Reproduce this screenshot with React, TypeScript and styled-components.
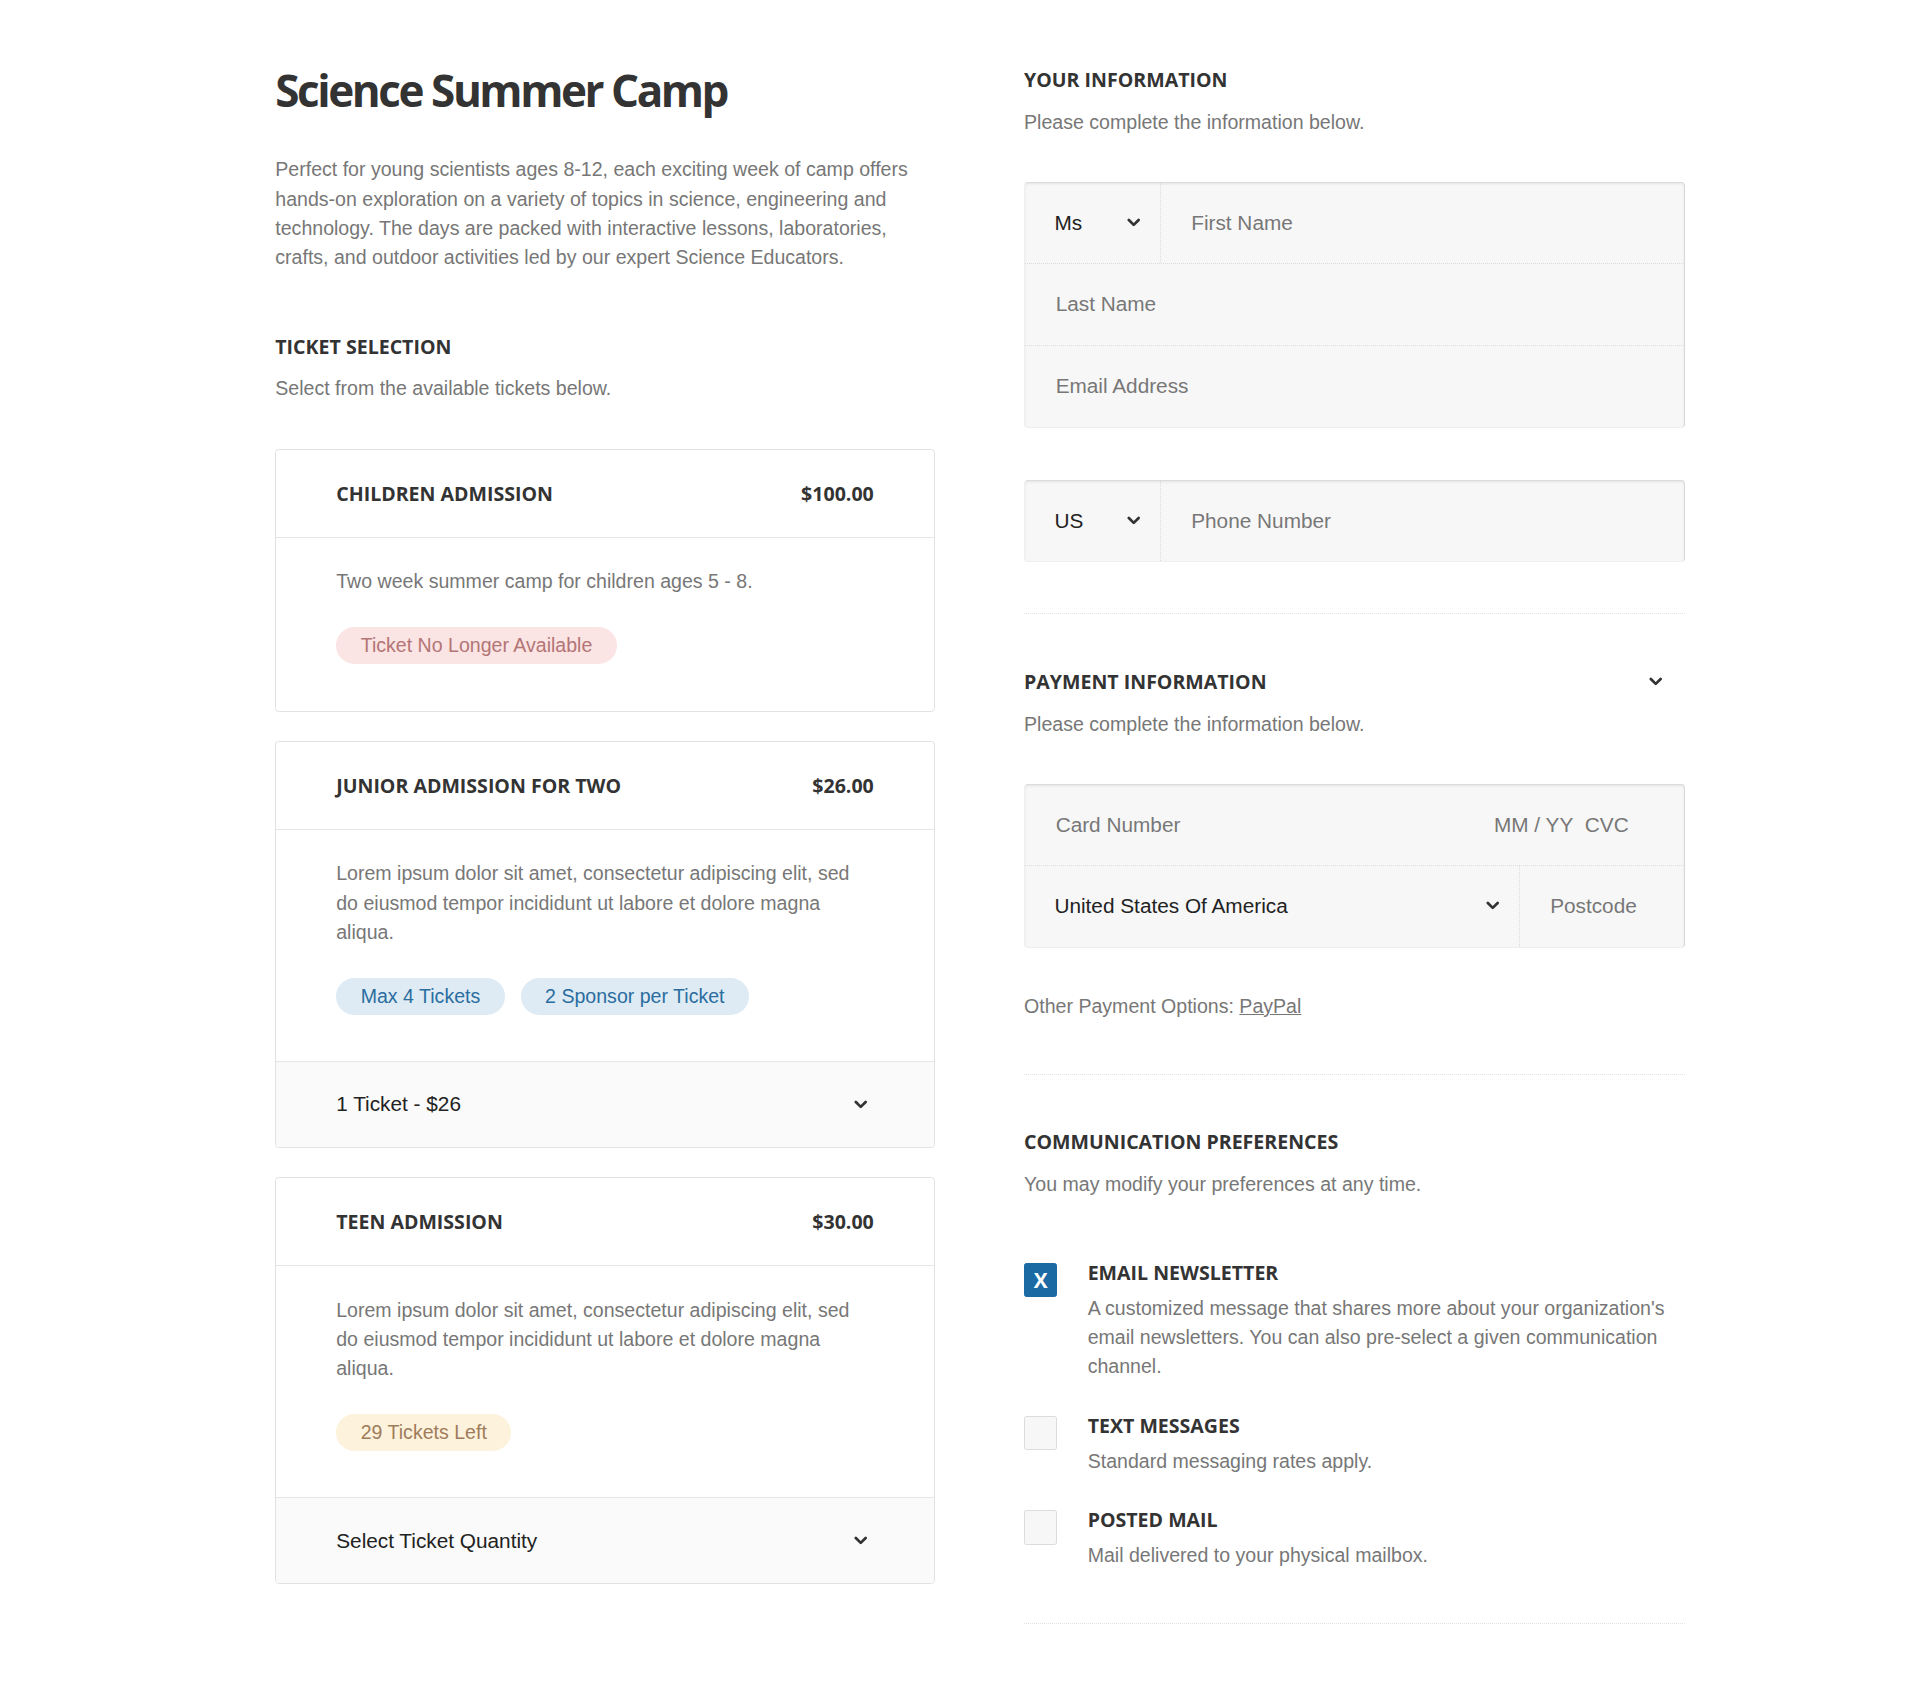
import React from 'react'
import styled, { createGlobalStyle } from 'styled-components'

const headFont = `'Open Sans', 'Noto Sans', sans-serif`
const bodyFont = `'Liberation Sans', Arial, sans-serif`

const GlobalStyle = createGlobalStyle`
	html, body {
		margin: 0;
		padding: 0;
		background: #ffffff;
	}
	* {
		box-sizing: border-box;
	}
`

// the reference is drawn at ~1.22x, so design px are scaled once here
const Page = styled.div`
	zoom: 1.2235;
	width: 1569px;
	min-height: 1382px;
	display: grid;
	grid-template-columns: 539px 540px;
	column-gap: 73px;
	align-items: start;
	padding-left: 225px;
	background: #fff;
`

const Column = styled.div<{ $top: number }>`
	display: flex;
	flex-direction: column;
	padding-top: ${(p) => p.$top}px;
`

const Title = styled.h1`
	margin: 0;
	font-family: ${headFont};
	font-weight: 700;
	font-size: 36px;
	line-height: 44px;
	letter-spacing: -2px;
	color: #333;
`

const Lead = styled.p`
	margin: 31px 0 0;
	font-family: ${bodyFont};
	font-size: 16px;
	line-height: 24px;
	color: #777;
`

const SectionHead = styled.div<{ $mt: number }>`
	display: flex;
	align-items: center;
	justify-content: space-between;
	margin-top: ${(p) => p.$mt}px;
	padding-right: 18px;
`

const SectionTitle = styled.h2`
	margin: 0;
	font-family: ${headFont};
	font-weight: 700;
	font-size: 16px;
	line-height: 24px;
	color: #333;
`

const Subtitle = styled.p`
	margin: 11px 0 0;
	font-family: ${bodyFont};
	font-size: 16px;
	line-height: 24px;
	color: #777;
`

const CardStack = styled.div`
	display: flex;
	flex-direction: column;
	gap: 24px;
	margin-top: 37px;
`

const TicketCard = styled.section`
	border: 1px solid #e2e2e2;
	border-radius: 3px;
	background: #fff;
	overflow: hidden;
`

const CardHeader = styled.header`
	display: flex;
	align-items: center;
	justify-content: space-between;
	height: 72px;
	padding: 0 49px;
	border-bottom: 1px solid #e6e6e6;
	font-family: ${headFont};
	font-weight: 700;
	font-size: 16px;
	color: #333;
`

const CardBody = styled.div`
	padding: 24px 49px 38px;
`

const Description = styled.p`
	margin: 0;
	font-family: ${bodyFont};
	font-size: 16px;
	line-height: 24px;
	color: #777;
`

const BadgeRow = styled.div`
	display: flex;
	gap: 13px;
	margin-top: 25px;
`

const badgeTones = {
	red: { bg: '#fbe4e4', fg: '#b37575' },
	blue: { bg: '#deebf4', fg: '#2b6d9f' },
	yellow: { bg: '#fdf2db', fg: '#a07c5c' },
}

const Badge = styled.span<{ $tone: keyof typeof badgeTones }>`
	display: inline-flex;
	align-items: center;
	height: 30px;
	padding: 0 20px;
	border-radius: 15px;
	font-family: ${bodyFont};
	font-size: 16px;
	color: ${(p) => badgeTones[p.$tone].fg};
	background: ${(p) => badgeTones[p.$tone].bg};
`

const CardFooter = styled.div`
	display: flex;
	align-items: center;
	justify-content: space-between;
	height: 70px;
	padding: 0 54px 0 49px;
	border-top: 1px solid #e6e6e6;
	background: #fafafa;
	font-family: ${bodyFont};
	font-size: 17px;
	color: #222;
`

const FieldGroup = styled.div<{ $mt: number }>`
	margin-top: ${(p) => p.$mt}px;
	border: 1px solid #efefef;
	border-top-color: #dcdcdc;
	border-right-color: #d8d8d8;
	border-radius: 3px;
	background: #f7f7f7;
	box-shadow: inset 0 1px 2px rgba(0, 0, 0, 0.07);
`

const FieldRow = styled.div`
	display: flex;
	height: 65px;
	& + & {
		height: 67px;
		border-top: 1px dotted #dcdcdc;
	}
`

const SelectCell = styled.div<{ $w?: number }>`
	display: flex;
	align-items: center;
	justify-content: space-between;
	${(p) => (p.$w ? `width: ${p.$w}px;` : 'flex: 1;')}
	padding: 0 16px 0 24px;
	font-family: ${bodyFont};
	font-size: 17px;
	color: #222;
`

const InputCell = styled.div<{ $w?: number }>`
	display: flex;
	align-items: center;
	${(p) => (p.$w ? `width: ${p.$w}px;` : 'flex: 1;')}
	padding: 0 45px 0 25px;
	border-left: 1px dotted #dcdcdc;
	font-family: ${bodyFont};
	font-size: 17px;
	color: #777;
	&:first-child {
		border-left: none;
	}
`

const Spacer = styled.span`
	flex: 1;
`

const Divider = styled.hr<{ $mt: number }>`
	width: 100%;
	height: 0;
	margin: ${(p) => p.$mt}px 0 0;
	border: none;
	border-top: 1px dotted #e2e2e2;
`

const OtherOptions = styled.p`
	margin: 36px 0 0;
	font-family: ${bodyFont};
	font-size: 16px;
	line-height: 24px;
	color: #777;
	a {
		color: #777;
		text-decoration: underline;
	}
`

const PrefList = styled.div`
	display: flex;
	flex-direction: column;
	gap: 24px;
	margin-top: 48px;
`

const PrefItem = styled.div`
	display: grid;
	grid-template-columns: 27px 1fr;
	column-gap: 25px;
	align-items: start;
`

const Checkbox = styled.span<{ $checked?: boolean }>`
	display: flex;
	align-items: center;
	justify-content: center;
	width: 27px;
	height: 28px;
	margin-top: 4px;
	border-radius: 2px;
	border: 1px solid ${(p) => (p.$checked ? '#1c6aa3' : '#dcdcdc')};
	background: ${(p) => (p.$checked ? '#1c6aa3' : '#f7f7f7')};
	color: #fff;
	font-family: ${headFont};
	font-weight: 700;
	font-size: 17px;
	line-height: 1;
`

const PrefTitle = styled.h3`
	margin: 0;
	font-family: ${headFont};
	font-weight: 700;
	font-size: 16px;
	line-height: 24px;
	color: #333;
`

const PrefDesc = styled.p`
	margin: 5px 0 0;
	font-family: ${bodyFont};
	font-size: 16px;
	line-height: 24px;
	color: #777;
`

const Chevron = () => (
	<svg width="11" height="8" viewBox="0 0 11 8" aria-hidden="true">
		<path
			d="M1.5 1.6 L5.5 5.6 L9.5 1.6"
			fill="none"
			stroke="#333"
			strokeWidth="2.2"
			strokeLinecap="round"
			strokeLinejoin="round"
		/>
	</svg>
)

const tickets = [
	{
		name: 'Children Admission',
		price: '$100.00',
		text: 'Two week summer camp for children ages 5 - 8.',
		badges: [{ tone: 'red', label: 'Ticket No Longer Available' }],
		select: null,
	},
	{
		name: 'Junior Admission for Two',
		price: '$26.00',
		text: 'Lorem ipsum dolor sit amet, consectetur adipiscing elit, sed do eiusmod tempor incididunt ut labore et dolore magna aliqua.',
		badges: [
			{ tone: 'blue', label: 'Max 4 Tickets' },
			{ tone: 'blue', label: '2 Sponsor per Ticket' },
		],
		select: '1 Ticket - $26',
	},
	{
		name: 'Teen Admission',
		price: '$30.00',
		text: 'Lorem ipsum dolor sit amet, consectetur adipiscing elit, sed do eiusmod tempor incididunt ut labore et dolore magna aliqua.',
		badges: [{ tone: 'yellow', label: '29 Tickets Left' }],
		select: 'Select Ticket Quantity',
	},
] as const

const prefs = [
	{
		title: 'Email Newsletter',
		text: "A customized message that shares more about your organization's email newsletters. You can also pre-select a given communication channel.",
		checked: true,
	},
	{
		title: 'Text Messages',
		text: 'Standard messaging rates apply.',
		checked: false,
	},
	{
		title: 'Posted Mail',
		text: 'Mail delivered to your physical mailbox.',
		checked: false,
	},
]

export default function App() {
	return (
		<>
			<GlobalStyle />
			<Page>
				<Column $top={52}>
					<Title>Science Summer Camp</Title>
					<Lead>
						Perfect for young scientists ages 8-12, each exciting week of camp
						offers hands-on exploration on a variety of topics in science,
						engineering and technology. The days are packed with interactive
						lessons, laboratories, crafts, and outdoor activities led by our
						expert Science Educators.
					</Lead>
					<SectionHead $mt={48}>
						<SectionTitle>TICKET SELECTION</SectionTitle>
					</SectionHead>
					<Subtitle>Select from the available tickets below.</Subtitle>
					<CardStack>
						{tickets.map((t) => (
							<TicketCard key={t.name}>
								<CardHeader>
									<span>{t.name.toUpperCase()}</span>
									<span>{t.price}</span>
								</CardHeader>
								<CardBody>
									<Description>{t.text}</Description>
									<BadgeRow>
										{t.badges.map((b) => (
											<Badge key={b.label} $tone={b.tone}>
												{b.label}
											</Badge>
										))}
									</BadgeRow>
								</CardBody>
								{t.select && (
									<CardFooter>
										<span>{t.select}</span>
										<Chevron />
									</CardFooter>
								)}
							</TicketCard>
						))}
					</CardStack>
				</Column>

				<Column $top={53}>
					<SectionTitle>YOUR INFORMATION</SectionTitle>
					<Subtitle>Please complete the information below.</Subtitle>
					<FieldGroup $mt={37}>
						<FieldRow>
							<SelectCell $w={110}>
								<span>Ms</span>
								<Chevron />
							</SelectCell>
							<InputCell>First Name</InputCell>
						</FieldRow>
						<FieldRow>
							<InputCell>Last Name</InputCell>
						</FieldRow>
						<FieldRow>
							<InputCell>Email Address</InputCell>
						</FieldRow>
					</FieldGroup>
					<FieldGroup $mt={43}>
						<FieldRow>
							<SelectCell $w={110}>
								<span>US</span>
								<Chevron />
							</SelectCell>
							<InputCell>Phone Number</InputCell>
						</FieldRow>
					</FieldGroup>
					<Divider $mt={42} />

					<SectionHead $mt={43}>
						<SectionTitle>PAYMENT INFORMATION</SectionTitle>
						<Chevron />
					</SectionHead>
					<Subtitle>Please complete the information below.</Subtitle>
					<FieldGroup $mt={37}>
						<FieldRow>
							<InputCell>
								<span>Card Number</span>
								<Spacer />
								<span>MM / YY</span>
								<span>&nbsp;&nbsp;CVC</span>
							</InputCell>
						</FieldRow>
						<FieldRow>
							<SelectCell>
								<span>United States Of America</span>
								<Chevron />
							</SelectCell>
							<InputCell $w={135}>Postcode</InputCell>
						</FieldRow>
					</FieldGroup>
					<OtherOptions>
						Other Payment Options: <a href="#paypal">PayPal</a>
					</OtherOptions>
					<Divider $mt={43} />

					<SectionHead $mt={43}>
						<SectionTitle>COMMUNICATION PREFERENCES</SectionTitle>
					</SectionHead>
					<Subtitle>You may modify your preferences at any time.</Subtitle>
					<PrefList>
						{prefs.map((p) => (
							<PrefItem key={p.title}>
								<Checkbox $checked={p.checked}>{p.checked ? 'X' : ''}</Checkbox>
								<div>
									<PrefTitle>{p.title.toUpperCase()}</PrefTitle>
									<PrefDesc>{p.text}</PrefDesc>
								</div>
							</PrefItem>
						))}
					</PrefList>
					<Divider $mt={43} />
				</Column>
			</Page>
		</>
	)
}
